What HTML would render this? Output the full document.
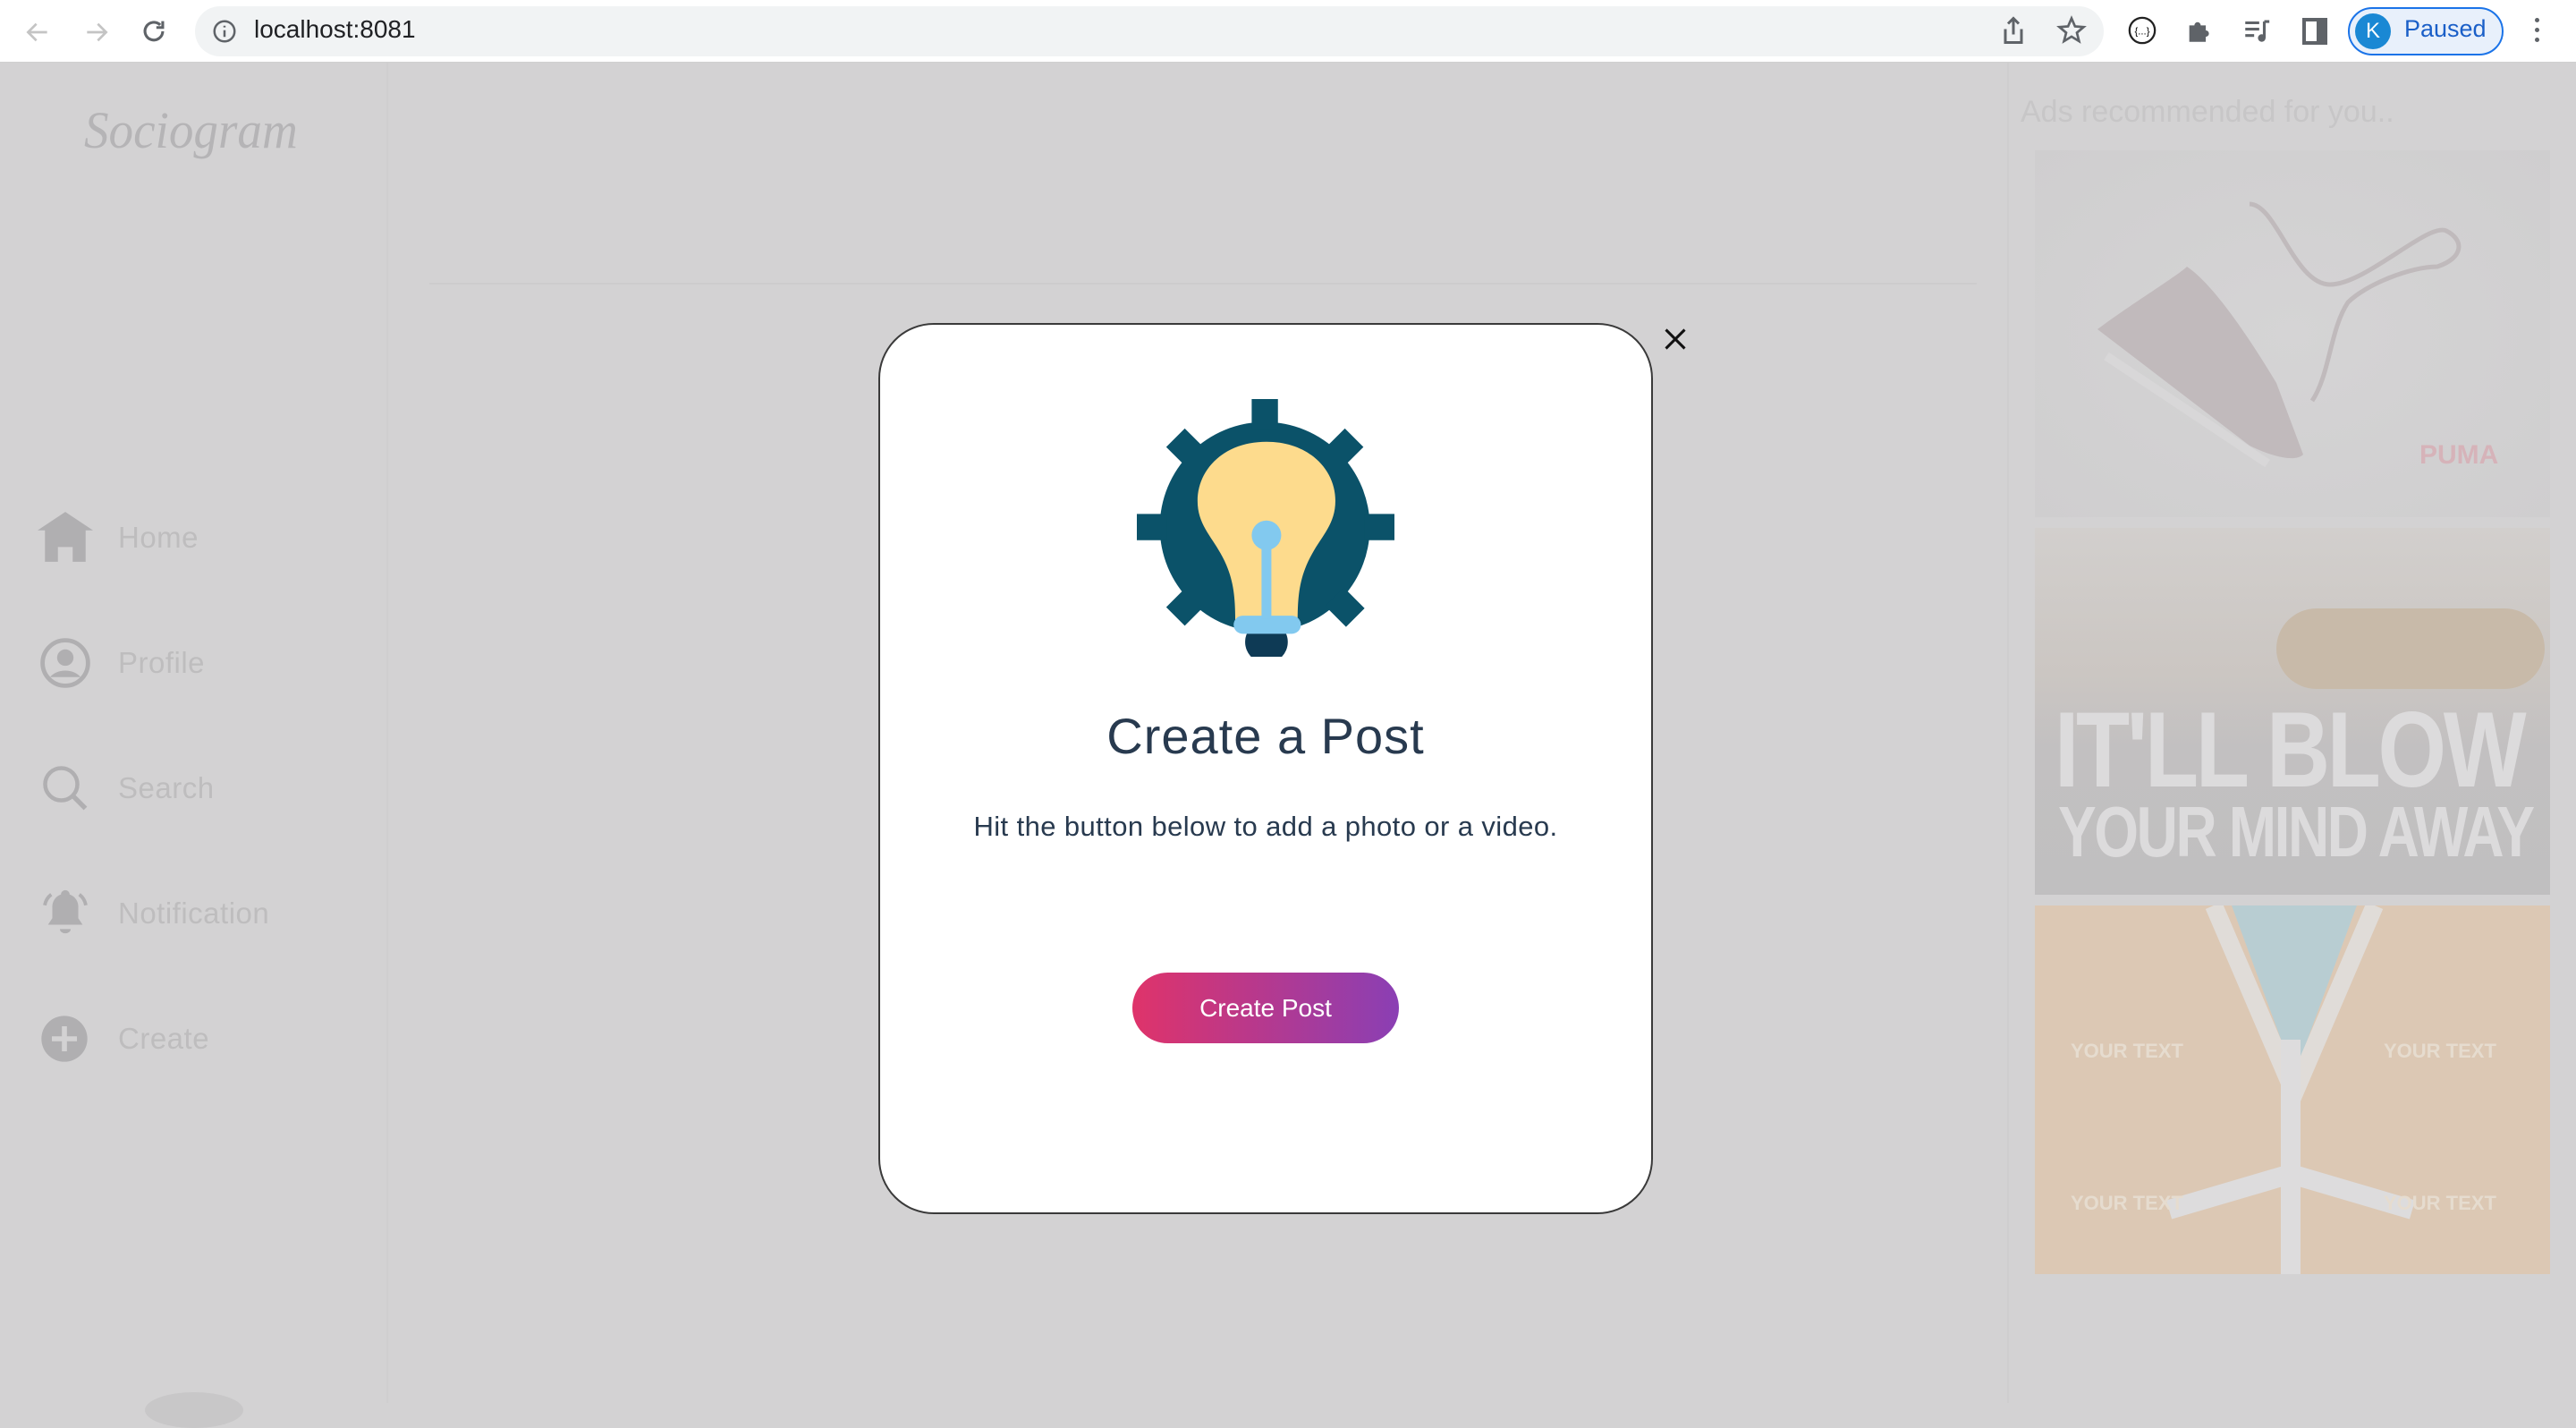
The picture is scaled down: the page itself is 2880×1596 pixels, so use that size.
<!DOCTYPE html>
<html><head><meta charset="utf-8"><style>
*{margin:0;padding:0;box-sizing:border-box}
body{width:2880px;height:1568px;overflow:hidden;background:#d3d2d3;font-family:"Liberation Sans",sans-serif;position:relative}
.bar{position:absolute;left:0;top:0;width:2880px;height:70px;background:#fff;border-bottom:1px solid #d0d0d0}
.addr{position:absolute;left:218px;top:7px;width:2134px;height:56px;border-radius:28px;background:#f1f3f4}
.abs{position:absolute}
.nav{position:absolute;left:132px;font-size:33px;color:#bebdbe;letter-spacing:0.5px}
.ad{position:absolute;left:2275px;width:576px;overflow:hidden}
</style></head><body>
<div class="bar">
 <svg class="abs" style="left:26px;top:20px" width="32" height="32" viewBox="0 0 24 24"><path d="M20 12H5M11 5l-7 7 7 7" stroke="#c4c4c4" stroke-width="2" fill="none"/></svg>
 <svg class="abs" style="left:92px;top:20px" width="32" height="32" viewBox="0 0 24 24"><path d="M4 12h15M13 5l7 7-7 7" stroke="#c4c4c4" stroke-width="2" fill="none"/></svg>
 <svg class="abs" style="left:155px;top:18px" width="34" height="34" viewBox="0 0 24 24"><path d="M19 12a7 7 0 1 1-2-5M19 4v5h-5" stroke="#5f6368" stroke-width="2.2" fill="none"/></svg>
 <div class="addr"></div>
 <svg class="abs" style="left:236px;top:20px" width="30" height="30" viewBox="0 0 24 24"><circle cx="12" cy="12" r="9" stroke="#5f6368" stroke-width="2" fill="none"/><path d="M12 11v6M12 7v1.5" stroke="#5f6368" stroke-width="2"/></svg>
 <div class="abs" style="left:284px;top:17px;font-size:28px;color:#202124">localhost:8081</div>
 <svg class="abs" style="left:2236px;top:16px" width="30" height="36" viewBox="0 0 20 24"><path d="M10 3v12M6 7l4-4 4 4M4 11v10h12V11" stroke="#5f6368" stroke-width="2" fill="none"/></svg>
 <svg class="abs" style="left:2298px;top:16px" width="36" height="36" viewBox="0 0 24 24"><path d="M12 3l2.6 6 6.4.5-5 4.2 1.6 6.3L12 16.6 6.4 20l1.6-6.3-5-4.2 6.4-.5z" stroke="#5f6368" stroke-width="1.8" fill="none"/></svg>
 <svg class="abs" style="left:2378px;top:17px" width="34" height="34" viewBox="0 0 24 24"><circle cx="12" cy="12" r="10" stroke="#222" stroke-width="1.6" fill="#fff"/><text x="12" y="15" font-size="8" text-anchor="middle" font-family="Liberation Sans">{...}</text></svg>
 <svg class="abs" style="left:2442px;top:17px" width="34" height="34" viewBox="0 0 24 24"><path d="M4 8h4a2.5 2.5 0 0 1 5 0h4v4a2.5 2.5 0 0 1 0 5v4H4z" fill="#5f6368"/></svg>
 <svg class="abs" style="left:2506px;top:17px" width="34" height="34" viewBox="0 0 24 24"><path d="M3 6h11M3 11h11M3 16h7" stroke="#5f6368" stroke-width="2.2"/><path d="M18 5v13" stroke="#5f6368" stroke-width="2.2"/><circle cx="16" cy="18" r="3" fill="#5f6368"/><path d="M18 5h4" stroke="#5f6368" stroke-width="2.2"/></svg>
 <div class="abs" style="left:2574px;top:20px;width:28px;height:30px;border:4px solid #5f6368;border-right-width:12px"></div>
 <div class="abs" style="left:2625px;top:8px;width:174px;height:54px;border-radius:27px;background:#e8f0fb;border:2px solid #1a73e8"></div>
 <div class="abs" style="left:2633px;top:15px;width:40px;height:40px;border-radius:50%;background:#1a88d4;color:#fff;font-size:24px;text-align:center;line-height:40px">K</div>
 <div class="abs" style="left:2688px;top:17px;font-size:27px;color:#1a5fc8">Paused</div>
 <div class="abs" style="left:2834px;top:20px;width:5px;height:5px;border-radius:50%;background:#5f6368;box-shadow:0 11px 0 #5f6368,0 22px 0 #5f6368"></div>
</div>

<div class="abs" style="left:432px;top:70px;width:2px;height:1498px;background:#cfcecf"></div>
<div class="abs" style="left:2244px;top:70px;width:2px;height:1498px;background:#cfcecf"></div>
<div class="abs" style="left:480px;top:316px;width:1730px;height:2px;background:#cdcccd"></div>
<div class="abs" style="left:94px;top:112px;font-family:'Liberation Serif',serif;font-style:italic;font-size:58px;color:#b5b4b6;transform:scaleX(.95);transform-origin:left">Sociogram</div>

<svg class="abs" style="left:42px;top:570px" width="62" height="62" viewBox="0 0 60 60"><path d="M0 22L30 2 60 22H52V56H38V40H22V56H8V22z" fill="#b0afb1"/></svg>
<div class="nav" style="top:582px">Home</div>
<svg class="abs" style="left:44px;top:712px" width="58" height="58" viewBox="0 0 24 24"><circle cx="12" cy="12" r="10.5" stroke="#b0afb1" stroke-width="2" fill="none"/><circle cx="12" cy="9.5" r="3.8" fill="#b0afb1"/><path d="M5 18.5c3-4 11-4 14 0" fill="#b0afb1"/></svg>
<div class="nav" style="top:722px">Profile</div>
<svg class="abs" style="left:46px;top:854px" width="54" height="54" viewBox="0 0 24 24"><circle cx="10" cy="10" r="8" stroke="#b0afb1" stroke-width="2" fill="none"/><path d="M16 16l6 6" stroke="#b0afb1" stroke-width="2.4"/></svg>
<div class="nav" style="top:862px">Search</div>
<svg class="abs" style="left:44px;top:990px" width="58" height="58" viewBox="0 0 24 24"><path d="M12 2a2 2 0 0 1 2 2 6 6 0 0 1 4 6v5l2 3H4l2-3v-5a6 6 0 0 1 4-6 2 2 0 0 1 2-2zM9.5 20a2.5 2 0 0 0 5 0z" fill="#b0afb1"/><path d="M2.5 9a8 8 0 0 1 3-5M21.5 9a8 8 0 0 0-3-5" stroke="#b0afb1" stroke-width="1.6" fill="none"/></svg>
<div class="nav" style="top:1002px">Notification</div>
<svg class="abs" style="left:44px;top:1133px" width="56" height="56" viewBox="0 0 24 24"><circle cx="12" cy="12" r="11" fill="#b0afb1"/><path d="M12 6v12M6 12h12" stroke="#d3d2d3" stroke-width="2.4"/></svg>
<div class="nav" style="top:1142px">Create</div>
<div class="abs" style="left:162px;top:1556px;width:110px;height:40px;border-radius:50%;background:#c8c7c8"></div>

<div class="abs" style="left:2259px;top:106px;font-size:34px;color:#c7c6c7">Ads recommended for you..</div>
<div class="ad" style="top:168px;height:410px;background:radial-gradient(ellipse at center,#d5d4d5,#cfcecf)">
 <svg width="576" height="410" viewBox="0 0 576 410"><path d="M240 60c30 0 50 90 90 90s110-70 130-60c20 10 20 30-10 40-30 0-80 20-100 40-20 30-20 80-40 110" stroke="#c0babc" stroke-width="5" fill="none"/><path d="M70 200c40-30 90-60 100-70 30 20 70 80 100 130l30 80c-10 10-40 0-60-10z" fill="#c1babc"/><path d="M80 230l180 120" stroke="#d8d7d8" stroke-width="10"/><text x="430" y="350" font-size="30" font-weight="bold" fill="#d6b3b9">PUMA</text></svg>
</div>
<div class="ad" style="top:590px;height:410px;background:linear-gradient(#d2cfcd 0%,#cbc6c2 40%,#c2c0c1 60%,#c0bfc0 100%)">
 <div class="abs" style="left:270px;top:90px;width:300px;height:90px;border-radius:45px;background:#c8baa9"></div>
 <div class="abs" style="left:22px;top:188px;white-space:nowrap;font-size:120px;font-weight:bold;color:#dcdbdc;letter-spacing:-4px;transform:scaleX(.82);transform-origin:left;line-height:1">IT'LL BLOW</div>
 <div class="abs" style="left:26px;top:300px;white-space:nowrap;font-size:80px;font-weight:bold;color:#dcdbdc;letter-spacing:-3px;transform:scaleX(.8);transform-origin:left;line-height:1">YOUR MIND AWAY</div>
</div>
<div class="ad" style="top:1012px;height:412px;background:#dcc8b4">
 <svg width="576" height="412" viewBox="0 0 576 412"><path d="M220 0L290 190 360 0z" fill="#b8cdd2"/><path d="M200 0L290 210 380 0" stroke="#e0dcd8" stroke-width="20" fill="none"/><path d="M286 150v262M150 340l136-40 136 40" stroke="#dddcdd" stroke-width="22" fill="none"/><text x="40" y="170" font-size="22" font-weight="bold" fill="#e6dccf">YOUR TEXT</text><text x="390" y="170" font-size="22" font-weight="bold" fill="#e6dccf">YOUR TEXT</text><text x="40" y="340" font-size="22" font-weight="bold" fill="#e6dccf">YOUR TEXT</text><text x="390" y="340" font-size="22" font-weight="bold" fill="#e6dccf">YOUR TEXT</text></svg>
</div>

<div class="abs" style="left:982px;top:361px;width:866px;height:996px;background:#fff;border:2px solid #3a3a3a;border-radius:62px"></div>
<svg class="abs" style="left:1859px;top:365px" width="28" height="28" viewBox="0 0 24 24"><path d="M3 3l18 18M21 3L3 21" stroke="#111" stroke-width="2.6"/></svg>
<svg class="abs" style="left:1271px;top:446px" width="288" height="288" viewBox="692 243 157 157">
 <g fill="#0b5269">
  <circle cx="770" cy="321" r="64"/>
  <rect x="762" y="243" width="16" height="18"/>
  <rect x="762" y="381" width="16" height="18"/>
  <rect x="692" y="313" width="18" height="16"/>
  <rect x="831" y="313" width="18" height="16"/>
  <g transform="rotate(45 770 321)"><rect x="762" y="244" width="16" height="18"/><rect x="762" y="380" width="16" height="18"/><rect x="693" y="313" width="18" height="16"/><rect x="830" y="313" width="18" height="16"/></g>
 </g>
 <circle cx="771" cy="391" r="13" fill="#0e3a55"/>
 <path d="M771 269c-26 0-42 17-42 36 0 14 8 21 14 32 8 14 9 26 9 42h38c0-16 1-28 9-42 6-11 14-18 14-32 0-19-16-36-42-36z" fill="#fddb8d"/>
 <rect x="751" y="375" width="41" height="11" rx="5.5" fill="#82c9ef"/>
 <rect x="768" y="325" width="6" height="52" fill="#82c9ef"/>
 <circle cx="771" cy="326" r="9" fill="#82c9ef"/>
</svg>
<div class="abs" style="left:982px;width:866px;top:790px;text-align:center;font-size:56px;color:#283a4f;letter-spacing:1px">Create a Post</div>
<div class="abs" style="left:982px;width:866px;top:906px;text-align:center;font-size:31px;color:#283a4f;letter-spacing:0.4px">Hit the button below to add a photo or a video.</div>
<div class="abs" style="left:1266px;top:1087px;width:298px;height:79px;border-radius:40px;background:linear-gradient(90deg,#df336a,#8a3fb4);color:#fff;font-size:28px;text-align:center;line-height:79px">Create Post</div>
</body></html>
